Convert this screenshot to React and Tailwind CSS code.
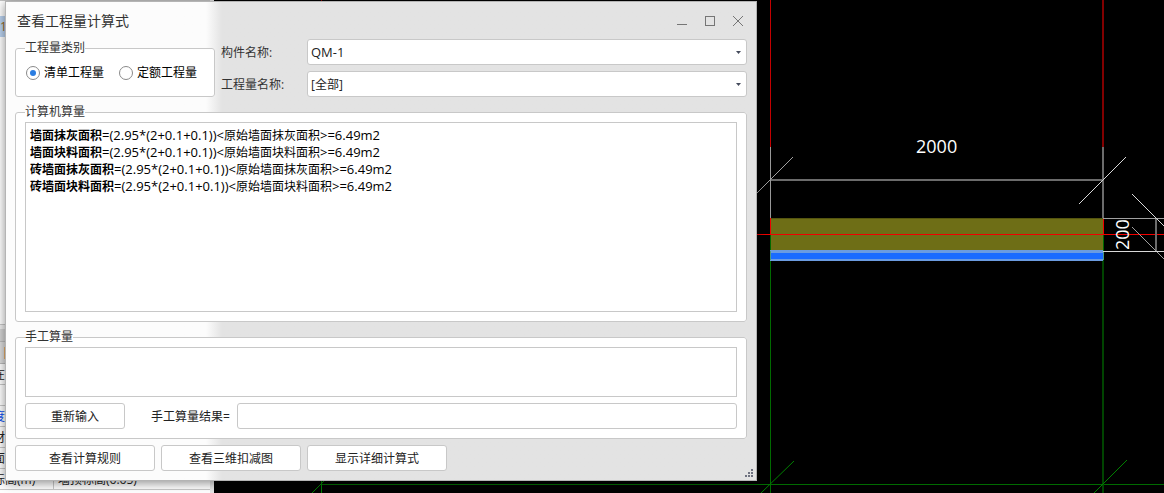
import React, { useState } from 'react';
import clsx from 'clsx';

const results = [
    { name: '墙面抹灰面积', formula: '=(2.95*(2+0.1+0.1))', source: '原始墙面抹灰面积', total: '=6.49m2' },
    { name: '墙面块料面积', formula: '=(2.95*(2+0.1+0.1))', source: '原始墙面块料面积', total: '=6.49m2' },
    { name: '砖墙面抹灰面积', formula: '=(2.95*(2+0.1+0.1))', source: '原始墙面抹灰面积', total: '=6.49m2' },
    { name: '砖墙面块料面积', formula: '=(2.95*(2+0.1+0.1))', source: '原始墙面块料面积', total: '=6.49m2' },
];

const properties = [
    { label: '在', value: '' },
    { label: '', value: '' },
    { label: '度', value: '', blue: true },
    { label: '材', value: '' },
    { label: '面', value: '' },
    { label: '标高(m)', value: '墙顶标高(6.65)' },
];

function Button({ className, children }) {
    return (
        <button
            type="button"
            className={clsx('h-[26px] rounded-[3px] border border-[#c8c8c8] bg-white pt-0.5 text-[#222] hover:bg-gray-50', className)}
        >
            {children}
        </button>
    );
}

function Group({ title, className, children }) {
    return (
        <fieldset className={clsx('min-w-0 rounded-[3px] border border-[#c8c8c8] bg-white px-[9px] pt-px pb-[9px]', className)}>
            <legend className="leading-[18px] text-[#333]">{title}</legend>
            {children}
        </fieldset>
    );
}

function Radio({ label, value, current, onChange }) {
    return (
        <label className="flex items-center gap-1 text-black">
            <input
                type="radio"
                name="category"
                value={value}
                checked={current === value}
                onChange={() => onChange(value)}
                className="grid size-[14px] appearance-none place-items-center rounded-full border border-[#8a8a8a] bg-white before:size-[6px] before:rounded-full checked:before:bg-[#2a7de1]"
            />
            {label}
        </label>
    );
}

function SelectField({ id, label, option, className }) {
    return (
        <div className="flex items-center">
            <label htmlFor={id} className="w-[86px] shrink-0 pt-0.5 text-[#333]">{label}</label>
            <div className="relative min-w-0 flex-1">
                <select
                    id={id}
                    className={clsx('block h-[26px] w-full appearance-none rounded-[3px] border border-[#c8c8c8] bg-white px-[3px] pt-0.5 text-[#222]', className)}
                >
                    <option>{option}</option>
                </select>
                <svg className="pointer-events-none absolute top-3 right-[6px]" width="5" height="3" viewBox="0 0 5 3" aria-hidden="true">
                    <path d="M0 0H5L2.5 3Z" fill="#454b5c" />
                </svg>
            </div>
        </div>
    );
}

function WindowButton({ label, children }) {
    return (
        <button type="button" aria-label={label} className="grid h-7 w-7 place-items-center">
            <svg width="12" height="12" viewBox="0 0 12 12" fill="none" stroke="#757575" aria-hidden="true">
                {children}
            </svg>
        </button>
    );
}

// Property list docked behind the dialog
function SidePanel() {
    return (
        <aside className="flex w-[214px] shrink-0 flex-col overflow-hidden border-r-4 border-[#e4e4e4] bg-white text-[#222]">
            <div className="h-4 border-t border-[#c4c4c4]" />
            <div className="h-[21px] bg-[#b9d1ee] leading-[21px] text-[#9a6a1c]">
                <span>1</span>
            </div>
            <div className="h-[287px]" />
            <div className="h-[5px] border-t border-[#c8c8c8] bg-[#eee]" />
            <div className="h-3 bg-[#d4d4d4]" />
            <div className="flex h-[23px] items-center border-y border-[#bbb] bg-[#dcdcdc] pl-1">
                <span className="h-3 w-1 bg-[#e9b06c]" />
            </div>
            <div className="-ml-[7px]">
                {properties.map((row, i) => (
                    <div key={i} className="flex h-[21px] border-b border-[#c9c9c9] leading-[22px]">
                        <span className={clsx('w-[61px] shrink-0 border-r border-[#c9c9c9]', row.blue && 'text-[#0a4df0]')}>
                            {row.label}
                        </span>
                        <span className="pl-1">{row.value}</span>
                    </div>
                ))}
            </div>
        </aside>
    );
}

// Plan view of the wall with its dimension lines
function Drawing() {
    return (
        <main className="min-w-0 flex-1 overflow-hidden bg-black">
            <svg width="950" height="493" viewBox="214 0 950 493" role="img" aria-label="2000 x 200">
                {/* axes */}
                <path d="M321.5 0V493" stroke="#8a0000" />
                <path d="M770.5 0V147" stroke="#c40000" />
                <path d="M1103 0V147" stroke="#820000" strokeWidth="2" />
                <path d="M321 484.5H1164M770.5 261V493" stroke="#006a00" />
                <path d="M1103 251V493" stroke="#004400" strokeWidth="2" />
                <path d="M321.5 481V493M312 493L325 480M761 493L794 461M1094 493L1127 460" stroke="#008000" />

                {/* wall */}
                <rect x="771" y="218" width="332" height="33" fill="#6e6e16" />
                <path d="M771 218.5H1103" stroke="#55550f" />
                <rect x="770" y="250" width="333" height="11" fill="#6b9be0" />
                <rect x="771" y="253" width="332" height="6" fill="#1a6bff" />
                <path d="M757 234.5H1164" stroke="#f00000" />
                <path d="M770.5 218V235M1103.5 218V235" stroke="#f00000" />
                <path d="M770.5 235V250M1103.5 235V251" stroke="#006a00" />
                <path d="M770.5 251V260M1103.5 252V260" stroke="#4c9b83" />

                {/* dimensions */}
                <path d="M770.5 147V218" stroke="#999" />
                <path d="M1103 147V218M771 180H1103M1156 218V251" stroke="#6b6b6b" strokeWidth="2" />
                <path d="M757 193L793 157M1132 227L1164 259M1103 218.5H1164" stroke="#a0a0a0" />
                <path d="M1079 204L1126 157M1132 194L1164 226M1103 251.5H1164" stroke="#d8d8d8" />
                <g fill="#fff" fontFamily="'Open Sans', sans-serif" fontSize="18">
                    <text x="916" y="153">2000</text>
                    <text transform="translate(1129 250) rotate(-90)">200</text>
                </g>
            </svg>
        </main>
    );
}

export default function App() {
    const [category, setCategory] = useState('list');
    const [manual, setManual] = useState('');

    return (
        <div className="relative flex h-screen overflow-hidden bg-black font-['Open_Sans','Noto_Sans_CJK_SC',sans-serif] text-xs">
            <SidePanel />
            <Drawing />

            <section
                role="dialog"
                aria-labelledby="dialog-title"
                className="absolute top-px left-[5px] w-[752px] max-w-full border border-[#b4b4b4] bg-linear-to-r from-[#fcfcfc] from-[200px] to-[#e3e3e3] to-[216px] shadow-[0_2px_10px_rgba(0,0,0,0.45)]"
            >
                <header className="flex h-[37px] items-center justify-between pr-1 pl-[11px]">
                    <h1 id="dialog-title" className="text-sm text-[#333]">查看工程量计算式</h1>
                    <div className="flex">
                        <WindowButton label="最小化">
                            <path d="M1 9.5H11" />
                        </WindowButton>
                        <WindowButton label="最大化">
                            <rect x="1.5" y="1.5" width="9" height="9" />
                        </WindowButton>
                        <WindowButton label="关闭">
                            <path d="M1 1L11 11M11 1L1 11" />
                        </WindowButton>
                    </div>
                </header>

                <div className="flex flex-col gap-1.5 px-[9px] pb-[9px]">
                    <div className="flex gap-1.5">
                        <Group title="工程量类别" className="w-[200px] shrink-0">
                            <div className="flex h-[29px] items-center gap-[15px] pl-px">
                                <Radio label="清单工程量" value="list" current={category} onChange={setCategory} />
                                <Radio label="定额工程量" value="quota" current={category} onChange={setCategory} />
                            </div>
                        </Group>
                        <div className="flex min-w-0 flex-1 flex-col gap-1.5">
                            <SelectField id="component" label="构件名称:" option="QM-1" className="text-[13px]" />
                            <SelectField id="quantity" label="工程量名称:" option="[全部]" />
                        </div>
                    </div>

                    <Group title="计算机算量">
                        <div className="h-[190px] overflow-auto border border-[#c8c8c8] bg-white p-1 text-[13px] leading-[17px] text-black">
                            {results.map((r) => (
                                <p key={r.name} className="h-[17px]">
                                    <b className="text-xs leading-[17px]">{r.name}</b>
                                    {r.formula}&lt;
                                    <span className="text-xs leading-[17px]">{r.source}</span>
                                    &gt;{r.total}
                                </p>
                            ))}
                        </div>
                    </Group>

                    <Group title="手工算量">
                        <textarea
                            aria-label="手工算量"
                            value={manual}
                            onChange={(e) => setManual(e.target.value)}
                            className="block h-[50px] w-full resize-none border border-[#c8c8c8] bg-white p-1"
                        />
                        <div className="mt-1.5 flex items-center gap-1.5">
                            <Button className="w-[100px] shrink-0">重新输入</Button>
                            <label htmlFor="result" className="w-[100px] shrink-0 pt-0.5 pl-5 text-[#222]">手工算量结果=</label>
                            <input
                                id="result"
                                type="text"
                                className="h-[26px] min-w-0 flex-1 rounded-[3px] border border-[#c8c8c8] bg-white px-1"
                            />
                        </div>
                    </Group>

                    <div className="flex gap-1.5">
                        <Button className="w-[140px]">查看计算规则</Button>
                        <Button className="w-[140px]">查看三维扣减图</Button>
                        <Button className="w-[140px]">显示详细计算式</Button>
                    </div>
                </div>

                {/* resize grip */}
                <svg className="absolute right-[3px] bottom-[3px]" width="8" height="8" viewBox="0 0 8 8" fill="#6f7280" aria-hidden="true">
                    <path d="M6 0h2v2h-2zM3 3h2v2h-2zM6 3h2v2h-2zM0 6h2v2h-2zM3 6h2v2h-2zM6 6h2v2h-2z" />
                </svg>
            </section>
        </div>
    );
}
